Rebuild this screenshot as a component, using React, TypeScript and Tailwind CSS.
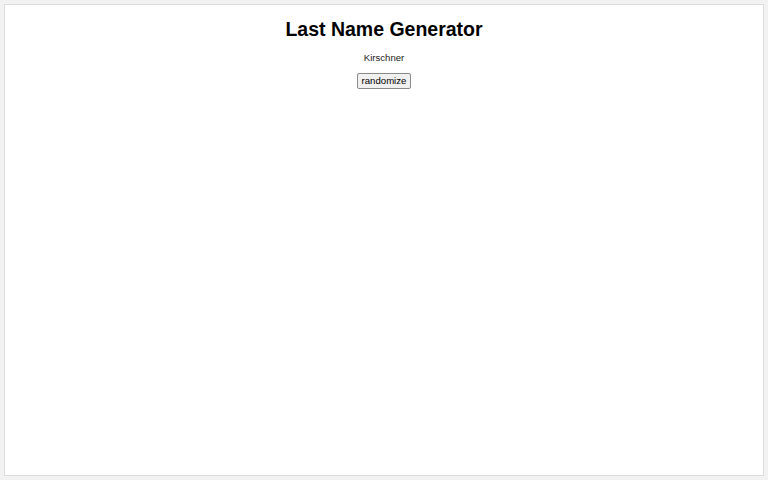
export default function App() {
  return (
    <div className="w-[768px] h-[480px] bg-[#f2f2f2] p-[4px] font-['Liberation_Sans',Arial,sans-serif]">
      <div className="w-full h-full bg-white border border-[#dcdcdc] flex flex-col items-center">
        <h1 className="mt-[13px] text-[19.5px] leading-[22px] font-bold text-black">Last Name Generator</h1>
        <p className="mt-[12px] text-[9.6px] leading-[12px] text-[#222]">Kirschner</p>
        <button className="mt-[9px] text-[9.6px] leading-[12px] text-black bg-[#f0f0f0] border border-[#8a8a8a] rounded-[2px] px-[4px] py-[1px]">randomize</button>
      </div>
    </div>
  );
}
